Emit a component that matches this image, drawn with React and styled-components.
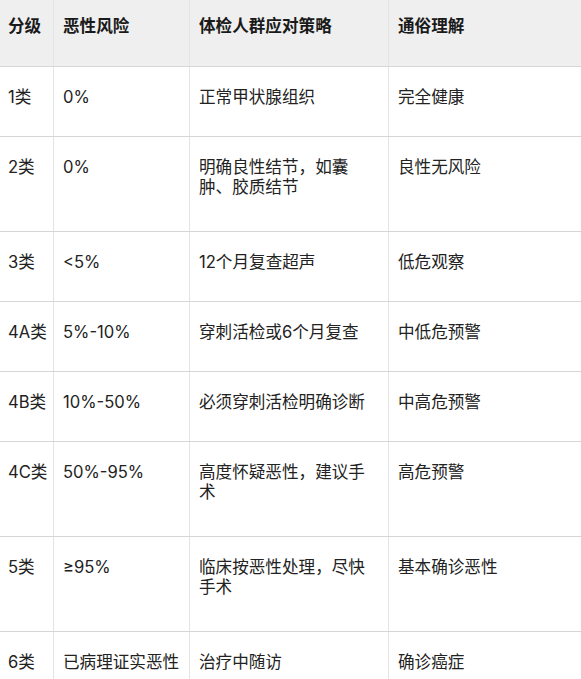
import styled, { createGlobalStyle } from 'styled-components';

const GlobalStyle = createGlobalStyle`
  html, body {
    margin: 0;
    padding: 0;
    background: #ffffff;
  }

  body {
    font-family: Inter, "Noto Sans CJK SC", sans-serif;
    color: #222222;
  }
`;

const rows = [
  { level: '1类', risk: '0%', plan: '正常甲状腺组织', meaning: '完全健康' },
  { level: '2类', risk: '0%', plan: '明确良性结节，如囊肿、胶质结节', meaning: '良性无风险', tall: true },
  { level: '3类', risk: '<5%', plan: '12个月复查超声', meaning: '低危观察' },
  { level: '4A类', risk: '5%-10%', plan: '穿刺活检或6个月复查', meaning: '中低危预警' },
  { level: '4B类', risk: '10%-50%', plan: '必须穿刺活检明确诊断', meaning: '中高危预警' },
  { level: '4C类', risk: '50%-95%', plan: '高度怀疑恶性，建议手术', meaning: '高危预警', tall: true },
  { level: '5类', risk: '≥95%', plan: '临床按恶性处理，尽快手术', meaning: '基本确诊恶性', tall: true },
  { level: '6类', risk: '已病理证实恶性', plan: '治疗中随访', meaning: '确诊癌症' },
];

const Table = styled.div`
  width: 581px;
  font-size: 16.6px;
  line-height: 20px;
`;

const Row = styled.div`
  display: grid;
  grid-template-columns: 53px 136px 199px 1fr;
  box-sizing: border-box;
  height: ${(p) => (p.$head ? '67px' : p.$tall ? '95px' : '70px')};
  background: ${(p) => (p.$head ? '#efefef' : '#ffffff')};
  border-bottom: 1px solid #d6d6d6;
`;

const Cell = styled.div`
  padding: ${(p) => (p.$head ? '16px' : '20px')} 9px 0 ${(p) => (p.$first ? '8px' : '9px')};
  border-left: ${(p) => (p.$first ? 'none' : '1px solid #e4e4e4')};
  white-space: ${(p) => (p.$first ? 'nowrap' : 'normal')};
  font-weight: ${(p) => (p.$head ? 700 : 400)};
  color: ${(p) => (p.$head ? '#1a1a1a' : '#222222')};
`;

const App = () => {
  return (
    <>
      <GlobalStyle />
      <Table>
        <Row $head>
          <Cell $head $first>分级</Cell>
          <Cell $head>恶性风险</Cell>
          <Cell $head>体检人群应对策略</Cell>
          <Cell $head>通俗理解</Cell>
        </Row>
        {rows.map((r) => (
          <Row key={r.level} $tall={r.tall}>
            <Cell $first>{r.level}</Cell>
            <Cell>{r.risk}</Cell>
            <Cell>{r.plan}</Cell>
            <Cell>{r.meaning}</Cell>
          </Row>
        ))}
      </Table>
    </>
  );
};

export default App;
